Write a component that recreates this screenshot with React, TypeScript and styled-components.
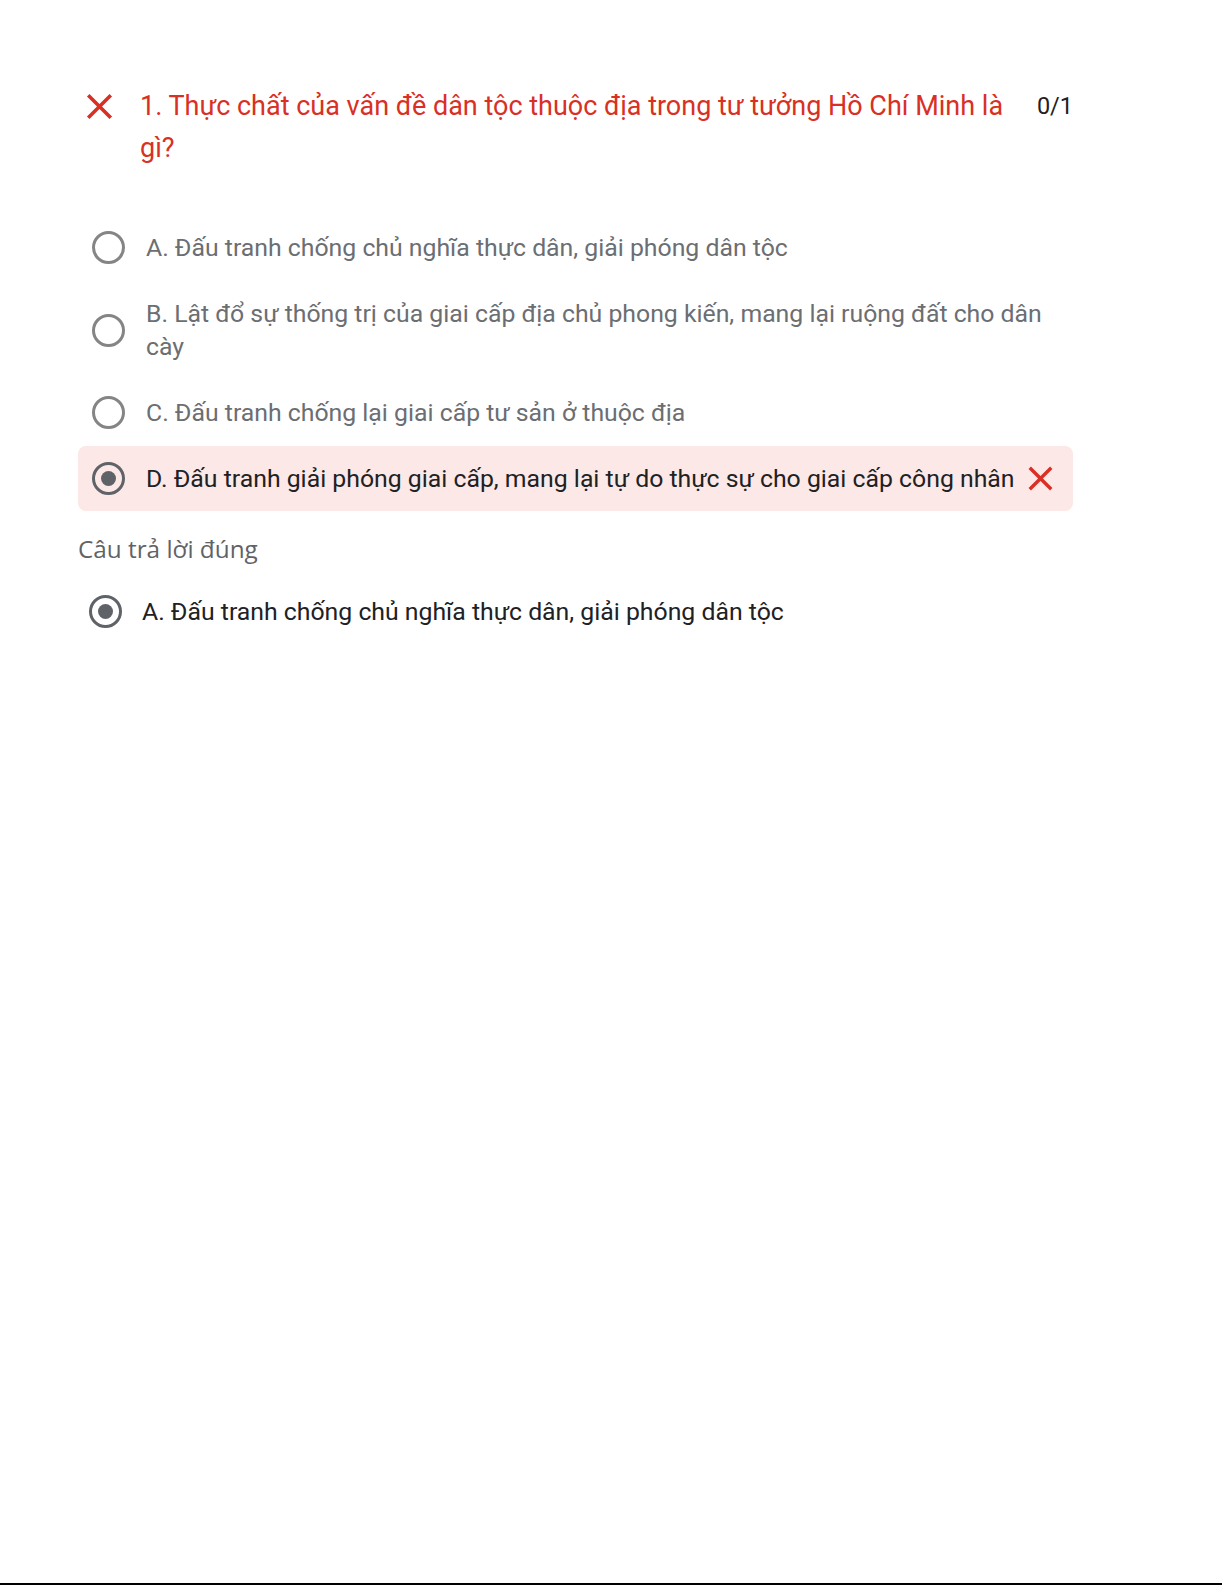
import React from "react";
import styled, {createGlobalStyle} from "styled-components";

const GlobalStyle = createGlobalStyle`
  html, body {
    margin: 0;
    padding: 0;
    background: #fff;
  }
  body {
    font-family: Roboto, "Noto Sans", Arial, sans-serif;
  }
`;

const Page = styled.div`
  display: flex;
  flex-direction: column;
  height: 1585px;
`;

const Card = styled.div`
  flex: 1;
  width: 995px;
  padding: 86px 0 0 78px;
`;

const QuestionHeader = styled.div`
  display: flex;
  align-items: flex-start;
`;

const IconBox = styled.span<{ $size: number; $inline?: boolean }>`
  width: ${p => p.$size}px;
  height: ${p => p.$size}px;
  flex-shrink: 0;
  display: flex;
  align-items: center;
  justify-content: center;
  color: #d93025;
  margin: ${p => (p.$inline ? "-4px 0 -4px 6px" : "-1px 0 0")};
  svg {
    width: 100%;
    height: 100%;
    fill: currentColor;
  }
`;

const Title = styled.div`
  width: 880px;
  margin-left: 19px;
  font-size: 27px;
  line-height: 41.5px;
  color: #d93025;
`;

const Score = styled.div`
  margin-left: auto;
  font-size: 23.5px;
  line-height: 41.5px;
  color: #202124;
`;

const OptionList = styled.div`
  margin-top: 46px;
  display: flex;
  flex-direction: column;
  gap: 1px;
`;

const OptionRow = styled.div<{ $wrong?: boolean }>`
  display: flex;
  align-items: center;
  padding: 16px 8px 16px 14px;
  border-radius: 8px;
  background: ${p => (p.$wrong ? "#fce8e6" : "transparent")};
`;

const Radio = styled.span<{ $checked?: boolean }>`
  width: 33px;
  height: 33px;
  box-sizing: border-box;
  flex-shrink: 0;
  border-radius: 50%;
  border: 3.4px solid ${p => (p.$checked ? "#5f6368" : "#858585")};
  display: flex;
  align-items: center;
  justify-content: center;
  &::after {
    content: "";
    display: ${p => (p.$checked ? "block" : "none")};
    width: 15px;
    height: 15px;
    border-radius: 50%;
    background: #5f6368;
  }
`;

const OptionText = styled.span<{ $dark?: boolean }>`
  margin-left: 21px;
  font-size: 24.8px;
  line-height: 33px;
  color: ${p => (p.$dark ? "#202124" : "#6b6e72")};
`;

const AnswerLabel = styled.div`
  margin-top: 21px;
  font-family: "Open Sans", Roboto, sans-serif;
  font-size: 24.3px;
  line-height: 33px;
  color: #5f6368;
`;

const CorrectRow = styled.div`
  margin-top: 14px;
  display: flex;
  align-items: center;
  padding: 16px 0 16px 11px;
  ${OptionText} {
    margin-left: 20px;
  }
`;

const BottomRule = styled.div`
  height: 2px;
  margin-right: 3px;
  background: #000;
`;

const CloseIcon = ({size, inline}: { size: number; inline?: boolean }) => (
  <IconBox $size={size} $inline={inline}>
    <svg viewBox="0 0 24 24">
      <path d="M19 6.41L17.59 5 12 10.59 6.41 5 5 6.41 10.59 12 5 17.59 6.41 19 12 13.41 17.59 19 19 17.59 13.41 12z"/>
    </svg>
  </IconBox>
);

const options = [
  "A. Đấu tranh chống chủ nghĩa thực dân, giải phóng dân tộc",
  "B. Lật đổ sự thống trị của giai cấp địa chủ phong kiến, mang lại ruộng đất cho dân cày",
  "C. Đấu tranh chống lại giai cấp tư sản ở thuộc địa",
  "D. Đấu tranh giải phóng giai cấp, mang lại tự do thực sự cho giai cấp công nhân",
];
const chosen = 3;

const App = () => (
  <Page>
    <GlobalStyle/>
    <Card>
      <QuestionHeader>
        <CloseIcon size={43}/>
        <Title>1. Thực chất của vấn đề dân tộc thuộc địa trong tư tưởng Hồ Chí Minh là gì?</Title>
        <Score>0/1</Score>
      </QuestionHeader>
      <OptionList>
        {options.map((text, i) => (
          <OptionRow key={i} $wrong={i === chosen}>
            <Radio $checked={i === chosen}/>
            <OptionText $dark={i === chosen}>{text}</OptionText>
            {i === chosen && <CloseIcon size={41} inline/>}
          </OptionRow>
        ))}
      </OptionList>
      <AnswerLabel>Câu trả lời đúng</AnswerLabel>
      <CorrectRow>
        <Radio $checked/>
        <OptionText $dark>{options[0]}</OptionText>
      </CorrectRow>
    </Card>
    <BottomRule/>
  </Page>
);

export default App;
